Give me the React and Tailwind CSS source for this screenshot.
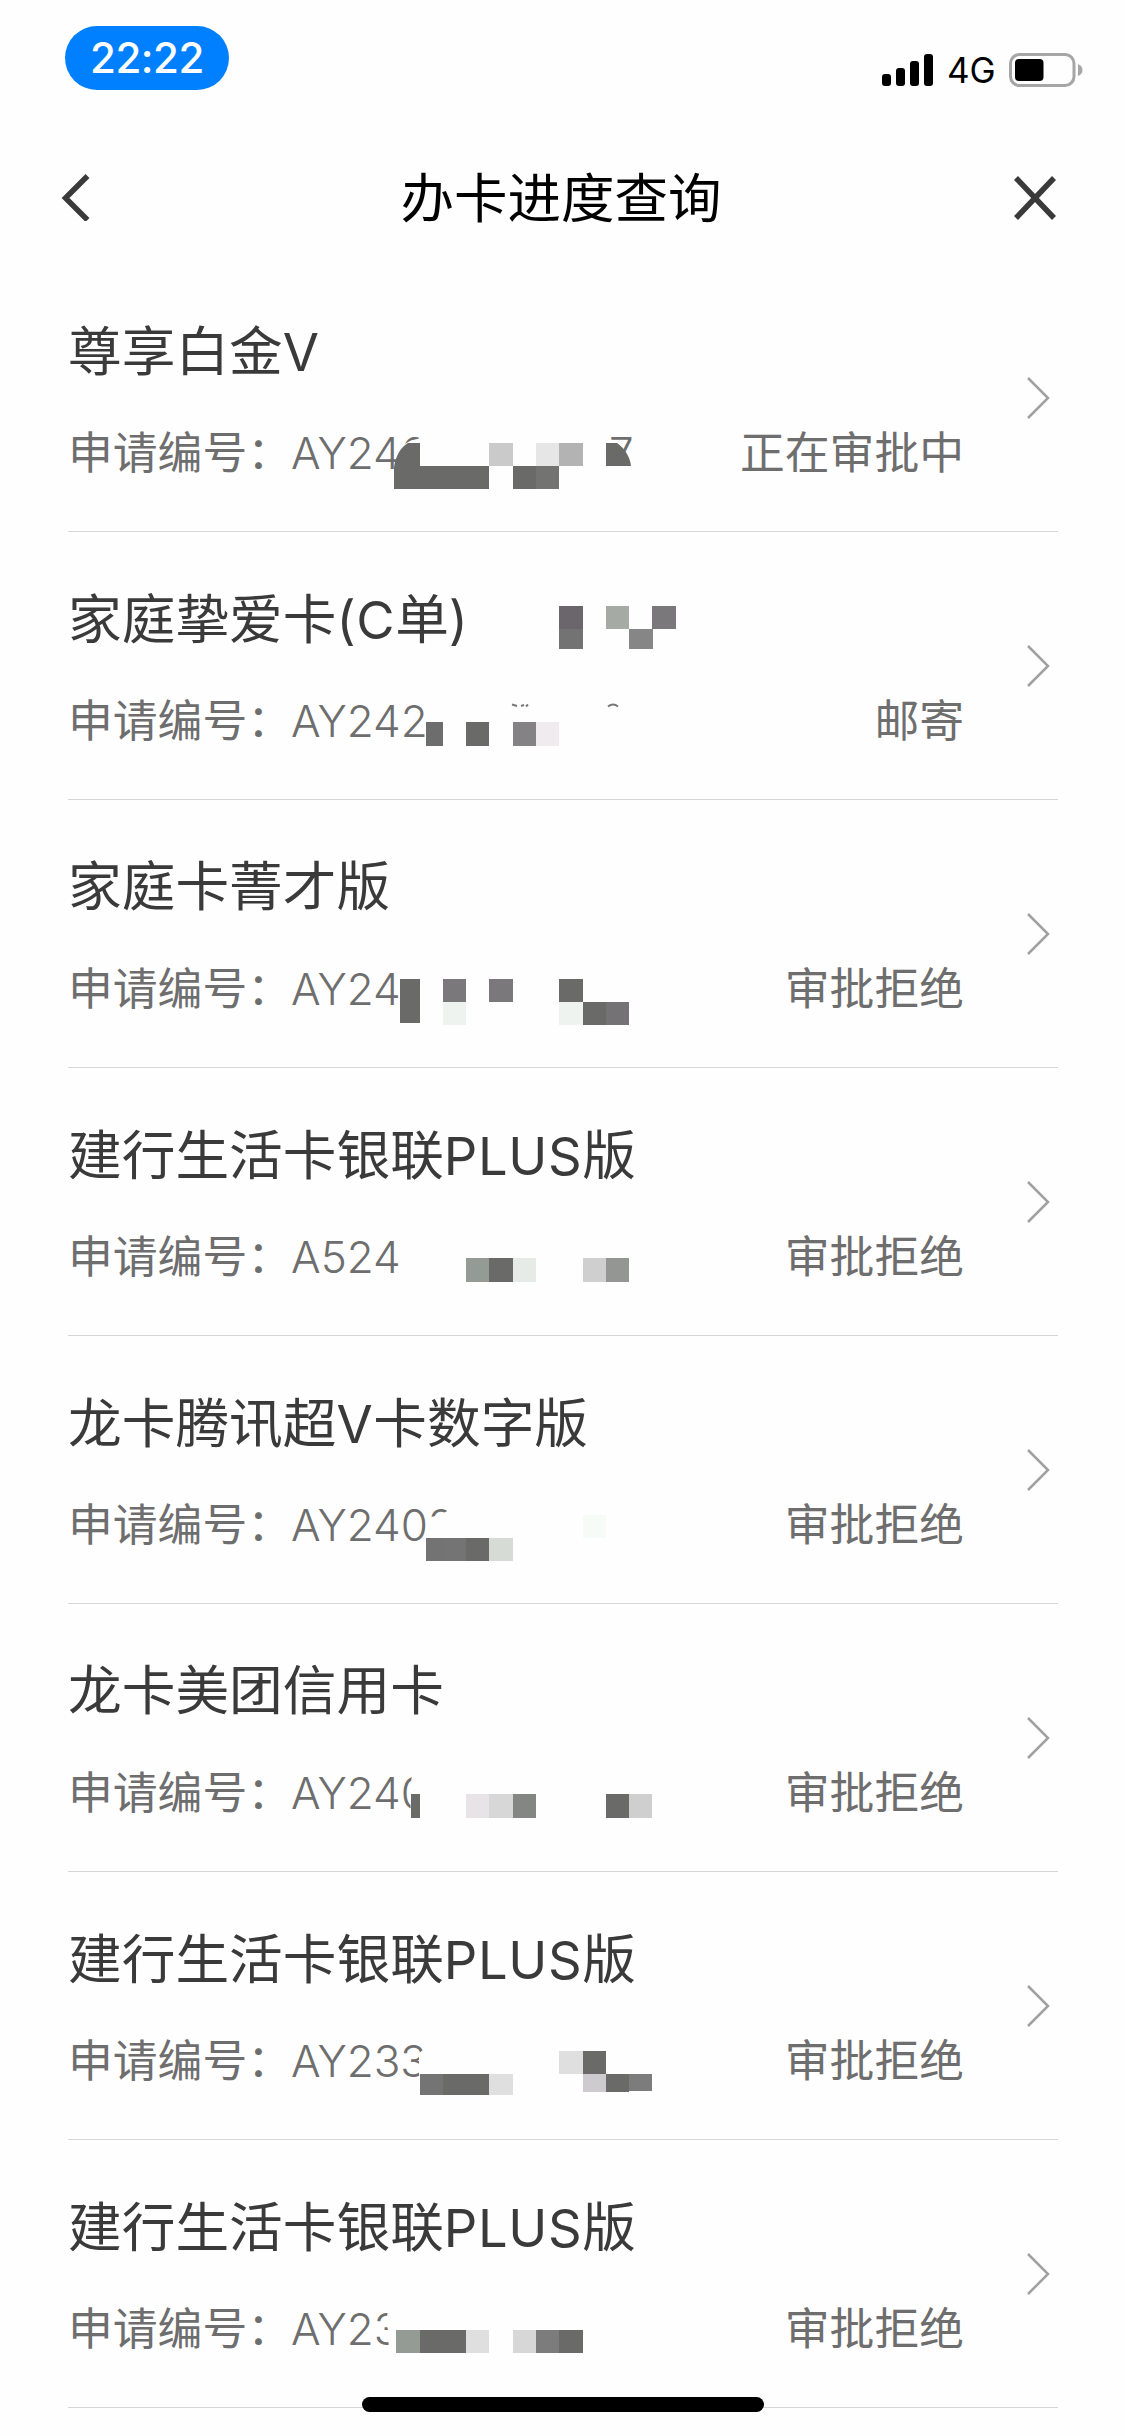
import React from "react";

const DARK = "#6a6b69";

// blocks: [x, y, width, height, color], in the row's own pixels
const cards = [
  {
    id: 1,
    title: "尊享白金V",
    code: "AY246",
    tail: "7",
    status: "正在审批中",
    covers: ["M398 226V184L410 177L419 174.5V168H600V226Z", "M600 202H640V226H600Z", "M600 177H611V182H600Z"],
    shapes: [
      "M394 225V203C396 191 401 183 408 179H420V202H489V225Z",
      "M606 179H617C624 184 630 192 631 202H606Z",
    ],
    blocks: [
      [489, 179, 24, 23, "#cbcacb"],
      [536, 179, 23, 23, "#e6e6e6"],
      [559, 179, 24, 23, "#b3b3b3"],
      [513, 202, 23, 23, DARK],
      [536, 202, 23, 23, "#737472"],
    ],
  },
  {
    id: 2,
    title: "家庭挚爱卡(C单)",
    code: "AY242",
    status: "邮寄",
    marks: ["M512 172.5L517 174", "M521 174L524 173M526 174.5L528 172.5", "M608 174.5Q613 170.5 618 174.5"],
    blocks: [
      [559, 74, 24, 23, "#6b656c"],
      [559, 97, 24, 20, "#727372"],
      [606, 74, 23, 23, "#a5aaa4"],
      [629, 97, 24, 20, "#858685"],
      [652, 74, 24, 23, "#7b787b"],
      [426, 190, 17, 24, "#6c6d6c"],
      [466, 190, 23, 24, DARK],
      [513, 190, 23, 24, "#858285"],
      [536, 190, 23, 24, "#efebef"],
    ],
  },
  {
    id: 3,
    title: "家庭卡菁才版",
    code: "AY24",
    status: "审批拒绝",
    blocks: [
      [400, 179, 20, 44, DARK],
      [443, 179, 23, 23, "#7b787b"],
      [443, 202, 23, 23, "#eff3ef"],
      [489, 179, 24, 23, "#7b787b"],
      [559, 179, 24, 23, DARK],
      [559, 202, 24, 23, "#eff3ef"],
      [583, 202, 23, 23, DARK],
      [606, 202, 23, 23, "#757275"],
    ],
  },
  {
    id: 4,
    title: "建行生活卡银联PLUS版",
    code: "A524",
    status: "审批拒绝",
    blocks: [
      [466, 190, 23, 24, "#949a94"],
      [489, 190, 24, 24, DARK],
      [513, 190, 23, 24, "#e7ebe7"],
      [583, 190, 23, 24, "#cecfce"],
      [606, 190, 23, 24, "#949694"],
    ],
  },
  {
    id: 5,
    title: "龙卡腾讯超V卡数字版",
    code: "AY2402",
    status: "审批拒绝",
    covers: ["M431 181L440 179L449 174V168H470V215H431Z"],
    blocks: [
      [426, 202, 17, 23, "#737373"],
      [443, 202, 23, 23, "#737473"],
      [466, 202, 23, 23, DARK],
      [489, 202, 24, 23, "#d6dbd6"],
      [583, 179, 23, 23, "#f7fbf7"],
    ],
  },
  {
    id: 6,
    title: "龙卡美团信用卡",
    code: "AY240",
    status: "审批拒绝",
    covers: ["M413 165L410 184L411 215H436V165Z"],
    blocks: [
      [411, 190, 9, 24, DARK],
      [466, 190, 23, 24, "#e7e3e7"],
      [489, 190, 24, 24, "#d6d7d6"],
      [513, 190, 23, 24, "#848684"],
      [606, 190, 23, 24, DARK],
      [629, 190, 23, 24, "#cecfce"],
    ],
  },
  {
    id: 7,
    title: "建行生活卡银联PLUS版",
    code: "AY233",
    status: "审批拒绝",
    covers: ["M423 165V178L419 181V202L421 215H440V165Z"],
    shapes: ["M606 202H629V220H606Z"],
    blocks: [
      [420, 202, 23, 21, "#737473"],
      [443, 202, 46, 21, DARK],
      [489, 202, 24, 21, "#dedfde"],
      [559, 179, 24, 23, "#dedfde"],
      [583, 179, 23, 23, DARK],
      [583, 202, 23, 18, "#cecbce"],
      [629, 202, 23, 17, "#7b7c7b"],
    ],
  },
  {
    id: 8,
    title: "建行生活卡银联PLUS版",
    code: "AY23",
    status: "审批拒绝",
    covers: ["M389 165L386 182L388 190L389 215H410V165Z"],
    blocks: [
      [396, 190, 24, 23, "#949a94"],
      [420, 190, 46, 23, DARK],
      [466, 190, 23, 23, "#dedfde"],
      [513, 190, 23, 23, "#d6d7d6"],
      [536, 190, 23, 23, "#7b7c7b"],
      [559, 190, 24, 23, DARK],
    ],
  },
];

const StatusBar = () => (
  <div className="flex h-[130px] items-start justify-between pl-[65px] pr-[42px] pt-[26px] font-['Inter','Liberation_Sans',sans-serif]">
    <div className="flex h-16 w-[164px] items-center justify-center rounded-[32px] bg-[#0080ff] text-[42px] font-medium leading-none tracking-[-0.5px] text-white">
      22:22
    </div>
    <div className="flex items-center pt-[27px]">
      <svg className="h-8 w-[52px]" viewBox="0 0 52 32">
        <rect x="0" y="20" width="9" height="12" rx="3" />
        <rect x="14" y="14" width="9" height="18" rx="3" />
        <rect x="28" y="7" width="9" height="25" rx="3" />
        <rect x="42" y="0" width="9" height="32" rx="3" />
      </svg>
      <span className="w-[75px] pl-[13px] text-[35px] leading-8 text-black">4G</span>
      <svg className="h-[34px] w-[74px]" viewBox="0 0 74 34">
        <rect x="1.5" y="1.5" width="63.5" height="31" rx="9" fill="none" stroke="#a6a6a6" strokeWidth="3" />
        <rect x="6" y="6" width="28.5" height="22" rx="4" />
        <path d="M69 11Q73.5 13 73.5 17T69 23Z" fill="#a6a6a6" />
      </svg>
    </div>
  </div>
);

const NavBar = () => (
  <div className="flex h-[134px] items-center justify-between pl-[60px] pr-[66px]">
    <svg className="h-12 w-12" viewBox="0 0 48 48" fill="none" stroke="#3a3a3a" strokeWidth="5.5">
      <path d="M27.5 3L5.5 25L27.5 47" />
    </svg>
    <h1 className="pl-[3px] pt-[6px] text-[53.5px] leading-none text-black">办卡进度查询</h1>
    <svg className="h-12 w-12" viewBox="0 0 48 48" fill="none" stroke="#3a3a3a" strokeWidth="5.5">
      <path d="M5 5L43 45M43 5L5 45" />
    </svg>
  </div>
);

const Mosaic = ({ card }) => (
  <svg className="pointer-events-none absolute left-0 top-0 h-[267px] w-[700px]" viewBox="0 0 700 267">
    {card.covers?.map((d) => (
      <path key={d} d={d} fill="#fefefe" />
    ))}
    {card.shapes?.map((d) => (
      <path key={d} d={d} fill={DARK} />
    ))}
    {card.marks?.map((d) => (
      <path key={d} d={d} fill="none" stroke="#777" strokeWidth="2" />
    ))}
    {card.blocks.map(([x, y, w, h, color]) => (
      <rect key={`${x}-${y}`} x={x} y={y} width={w} height={h} fill={color} />
    ))}
  </svg>
);

const CardRow = ({ card }) => (
  <li className="relative h-[268px] pl-[68px] pr-[67px]">
    <div className="flex h-full items-center justify-between border-b border-[#d6d6d6]">
      <div className="flex w-[896px] flex-col pt-[5px]">
        <h2 className="h-[54px] whitespace-nowrap text-[53.7px] leading-[54px] text-[#3a3a3a]">
          {card.title.split(/([A-Z()]+)/).map((part, i) => (
            <span key={i} className={i % 2 ? "font-['Inter'] text-[52.5px] tracking-[0.6px]" : ""}>
              {part}
            </span>
          ))}
        </h2>
        <div className="mt-[52px] flex h-[45px] justify-between whitespace-nowrap text-[44.8px] leading-[45px] text-[#6e6e6e]">
          <p>
            申请编号：
            <span className="-ml-px font-['Inter'] text-[44px] font-light">{card.code}</span>
          </p>
          <p>{card.status}</p>
        </div>
      </div>
      <svg className="mr-2 h-11 w-6" viewBox="0 0 24 44" fill="none" stroke="#a0a0a0" strokeWidth="2.5">
        <path d="M2 2L22 22L2 42" />
      </svg>
    </div>
    {card.tail && (
      <span className="absolute left-[609px] top-[167px] font-['Inter'] text-[44px] font-light leading-[45px] text-[#6e6e6e]">
        {card.tail}
      </span>
    )}
    <Mosaic card={card} />
  </li>
);

const App = () => {
  return (
    <div className="relative h-[2436px] w-[1125px] overflow-hidden bg-[#fefefe] font-['Roboto','Noto_Sans_CJK_SC',sans-serif]">
      <StatusBar />
      <NavBar />
      <ul>
        {cards.map((card) => (
          <CardRow key={card.id} card={card} />
        ))}
      </ul>
      {/* home indicator */}
      <div className="absolute bottom-6 left-[362px] h-[15px] w-[402px] rounded-full bg-black" />
    </div>
  );
};

export default App;
